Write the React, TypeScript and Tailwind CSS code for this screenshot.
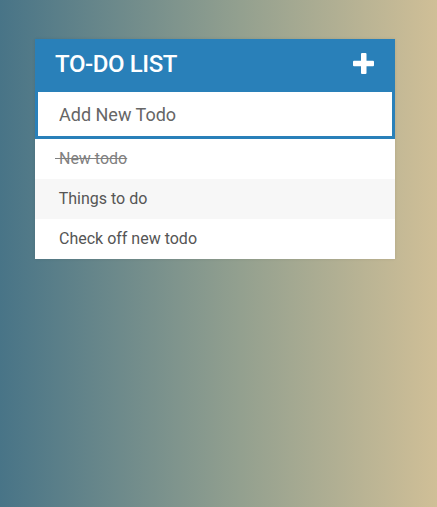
const todos = [
  { text: "New todo", done: true },
  { text: "Things to do", done: false },
  { text: "Check off new todo", done: false },
];

export default function App() {
  return (
    <main className="min-h-[507px] bg-[linear-gradient(to_right,#487487,#93a08f_55%,#d0bf97)] pt-[39px] font-['Roboto',sans-serif]">
      <div className="ml-[35px] w-[360px] bg-white shadow-[0_0_3px_rgba(0,0,0,0.1)]">
        <h1 className="flex h-[50px] items-center justify-between bg-[#2980b9] pl-[20px] pr-[21px] text-[24px] font-medium uppercase text-white">
          <span className="tracking-[-0.4px]">To-Do List</span>
          <svg width="21" height="21" viewBox="0 0 21 21" className="mb-[2px]">
            <rect x="8" y="0" width="5.5" height="21" rx="1" fill="white" />
            <rect x="0" y="7.8" width="21" height="5.5" rx="1" fill="white" />
          </svg>
        </h1>
        <input
          className="block h-[50px] w-full border-[3px] border-[#2980b9] bg-white pl-[21px] text-[18px] text-[#666] outline-none placeholder:text-[#666]"
          placeholder="Add New Todo"
        />
        <ul>
          {todos.map((todo, i) => (
            <li
              key={todo.text}
              className={`flex h-[40px] items-center whitespace-pre pl-[20px] text-[16px] ${i % 2 === 1 ? "bg-[#f7f7f7]" : "bg-white"} ${todo.done ? "text-[#808080] line-through" : "text-[#555]"}`}
            >
              <span className="inline-block w-0" />
              {" " + todo.text}
            </li>
          ))}
        </ul>
      </div>
    </main>
  );
}
